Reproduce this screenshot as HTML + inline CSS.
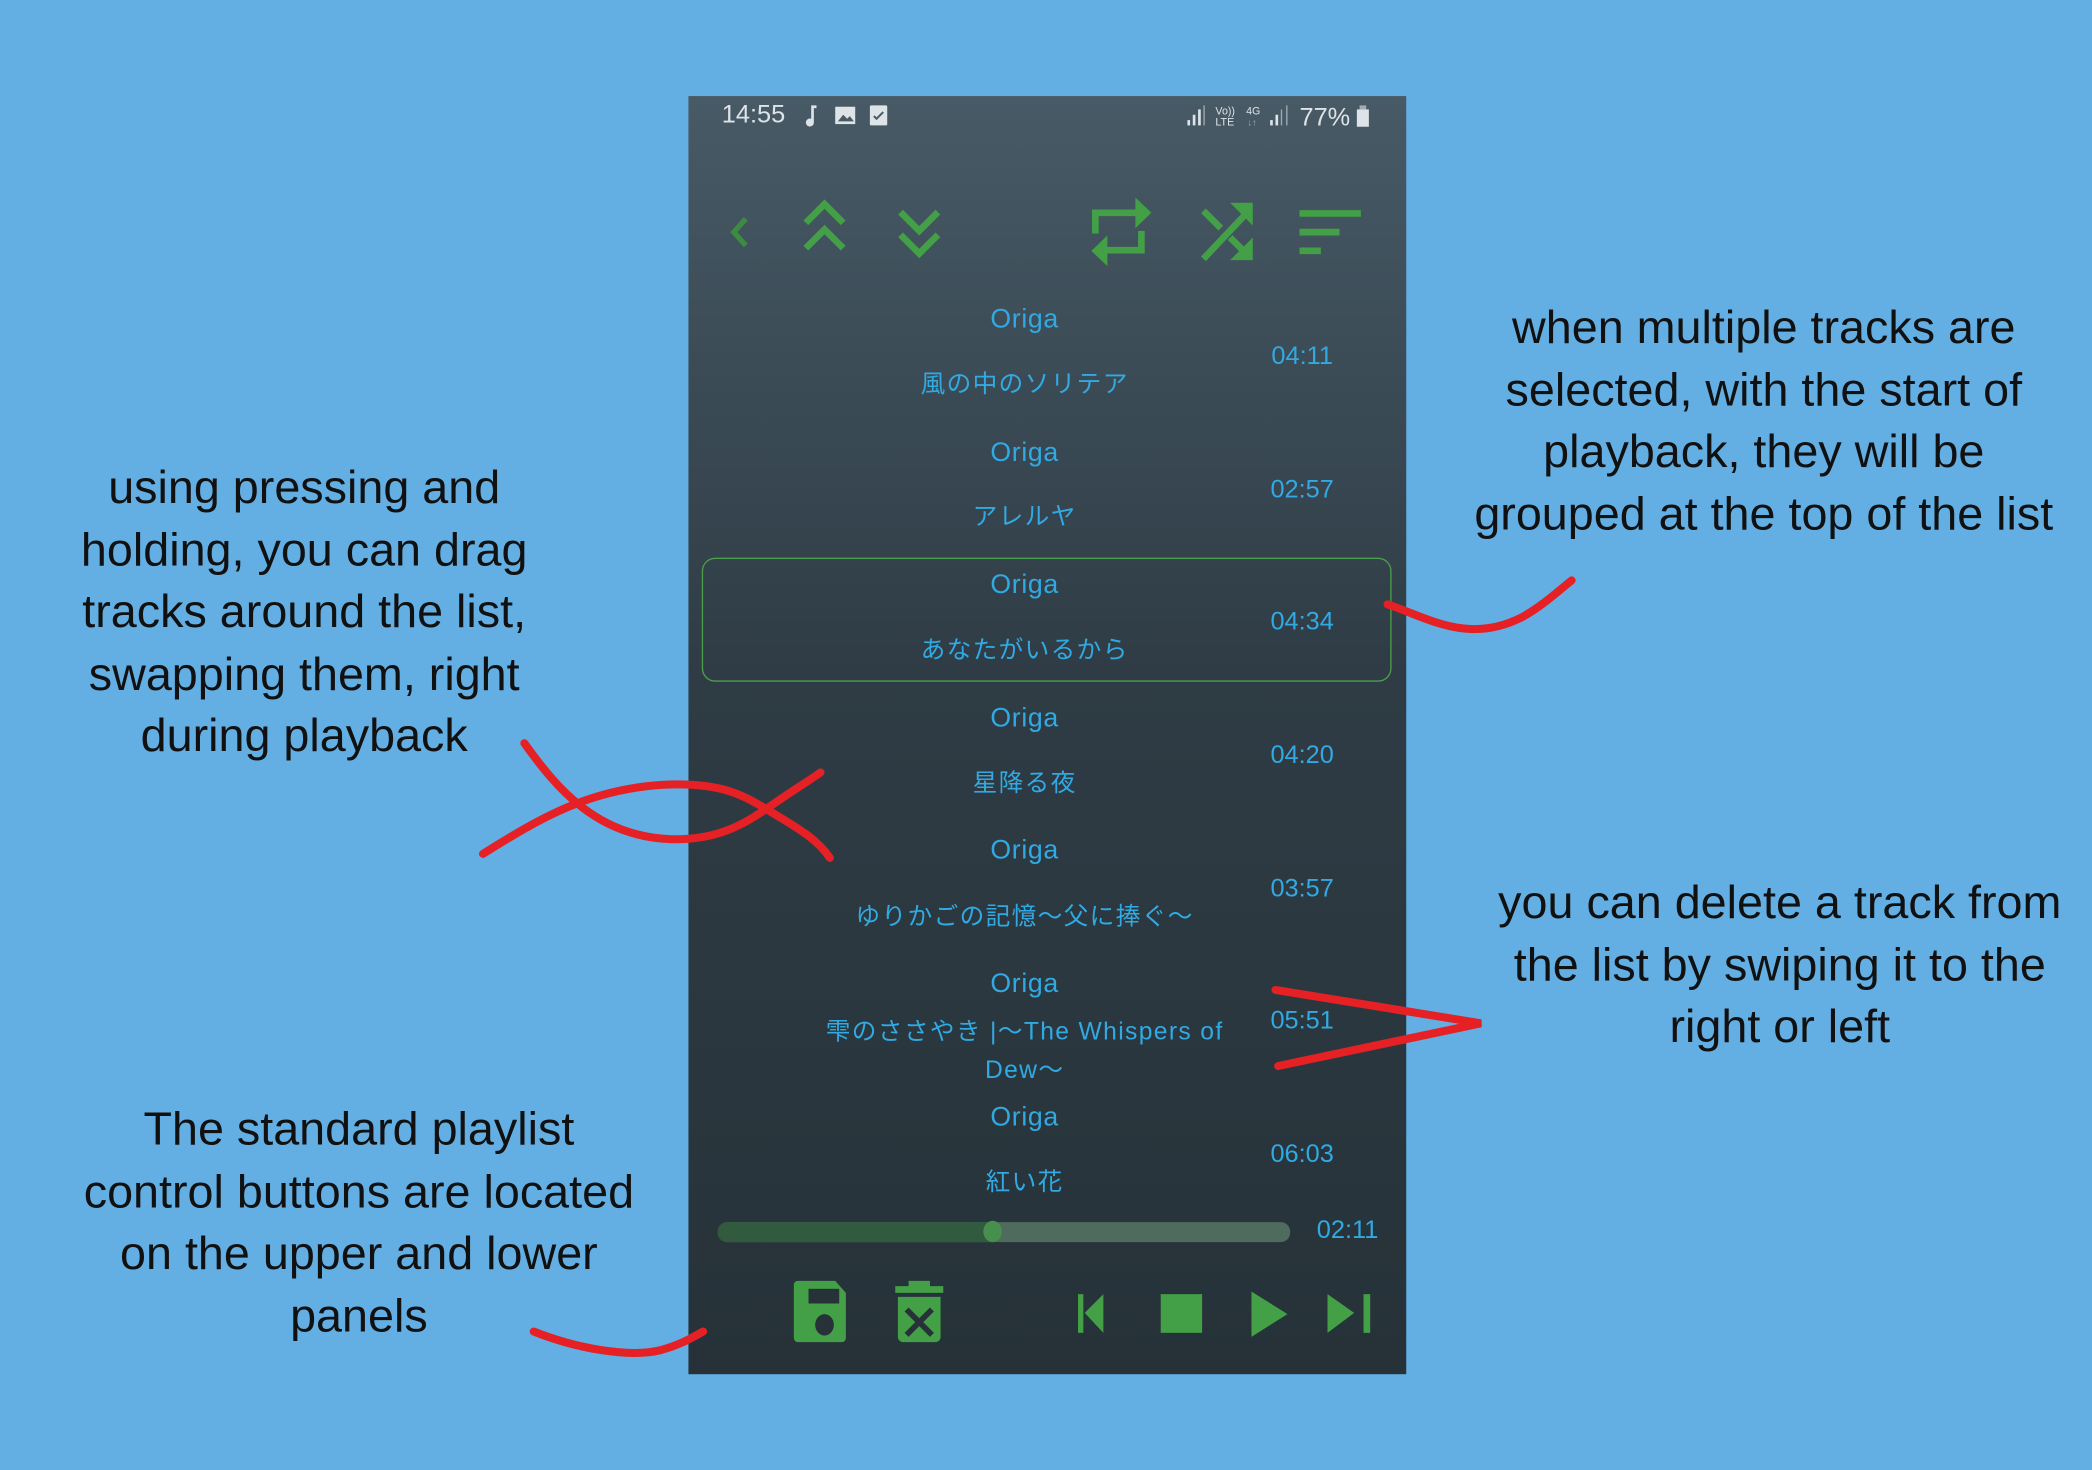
<!DOCTYPE html>
<html><head><meta charset="utf-8"><style>
html,body{margin:0;padding:0;width:2092px;height:1470px;overflow:hidden;background:#63afe3;}
#w{position:absolute;left:0;top:0;width:1568px;height:1102px;transform:scale(1.33418);transform-origin:0 0;font-family:"Liberation Sans","Noto Sans CJK JP",sans-serif;}
.ph{position:absolute;left:516px;top:72px;width:538px;height:958px;background:linear-gradient(#475a66,#2f3c45 45%,#263238);}
.t{position:absolute;color:#31a9e2;white-space:nowrap;transform:translate(-50%,-50%);}
.o{font-size:20px;letter-spacing:0.5px}
.n{font-size:18.5px;letter-spacing:1px}
.d{font-size:19px}
.a{position:absolute;color:#111;font-size:35px;text-align:center;line-height:46.5px;transform:translateX(-50%);white-space:nowrap;}
.s{position:absolute;color:#dde3e6;font-size:19px;}
</style></head><body><div id="w">
<div class="ph"></div>
<div class="s" style="left:541px;top:76px">14:55</div>
<svg style="position:absolute;left:600px;top:77px" width="70" height="20"><path d="M8 2h4v2h-2v11a3 3 0 1 1-2-3z" fill="#dde3e6"/><rect x="26" y="3" width="15" height="13" fill="#dde3e6"/><path d="M28 14l4-5 3 3 2-2 3 4z" fill="#475a66"/><rect x="52" y="2" width="13" height="15" rx="1" fill="#dde3e6"/><path d="M55 10l2 2 5-5" stroke="#475a66" stroke-width="1.5" fill="none"/></svg>
<svg style="position:absolute;left:888px;top:77px" width="145" height="20"><g fill="#dde3e6"><rect x="2" y="13" width="2" height="4"/><rect x="6" y="9" width="2" height="8"/><rect x="10" y="5" width="2" height="12"/><rect x="14" y="2" width="1" height="15" opacity=".6"/><text x="23" y="9" font-size="8">Vo))</text><text x="23" y="17" font-size="8">LTE</text><text x="46" y="9" font-size="8">4G</text><text x="47" y="17" font-size="7" opacity=".6">↓↑</text><rect x="64" y="13" width="2" height="4"/><rect x="68" y="9" width="2" height="8"/><rect x="72" y="5" width="1" height="12" opacity=".6"/><rect x="76" y="2" width="1" height="15" opacity=".6"/><text x="86" y="17" font-size="19">77%</text><rect x="129" y="5" width="9" height="13"/><rect x="131" y="2" width="5" height="3" opacity=".6"/></g></svg>
<svg style="position:absolute;left:516px;top:140px" width="538" height="70"><g fill="none" stroke="#43a047" stroke-width="5"><path d="M43 24l-9 10 9 10" stroke="#3d8a42" stroke-width="4"/><path d="M88 27l14-14 14 14M88 46l14-14 14 14"/><path d="M159 19l14 14 14-14M159 36l14 14 14-14"/><path d="M305 35V19.5h32M339.5 33v14.5H311"/><path d="M386 18l13 13M386 54L420 18M406 38l14 14"/><path d="M458 20h46M458 34h30M458 48h16"/></g><g fill="#43a047"><path d="M335 8l12 11.5-12 11.5z"/><path d="M314 36.5l-12 11.5 12 11.5z"/><path d="M423 12v17l-17-17z"/><path d="M423 55v-17l-17 17z"/></g></svg>
<div class="t o" style="left:768px;top:240px">Origa</div><div class="t n" style="left:768px;top:287px">風の中のソリテア</div><div class="t d" style="left:976px;top:268px">04:11</div>
<div class="t o" style="left:768px;top:340px">Origa</div><div class="t n" style="left:768px;top:386px">アレルヤ</div><div class="t d" style="left:976px;top:368px">02:57</div>
<div style="position:absolute;left:526px;top:418px;width:515px;height:91px;border:1.5px solid #4a9e4c;border-radius:10px"></div>
<div class="t o" style="left:768px;top:439px">Origa</div><div class="t n" style="left:768px;top:486px">あなたがいるから</div><div class="t d" style="left:976px;top:467px">04:34</div>
<div class="t o" style="left:768px;top:539px">Origa</div><div class="t n" style="left:768px;top:586px">星降る夜</div><div class="t d" style="left:976px;top:567px">04:20</div>
<div class="t o" style="left:768px;top:638px">Origa</div><div class="t n" style="left:768px;top:686px">ゆりかごの記憶〜父に捧ぐ〜</div><div class="t d" style="left:976px;top:667px">03:57</div>
<div class="t o" style="left:768px;top:738px">Origa</div><div class="t n" style="left:768px;top:772px">雫のささやき |〜The Whispers of</div><div class="t n" style="left:768px;top:801px">Dew〜</div><div class="t d" style="left:976px;top:766px">05:51</div>
<div class="t o" style="left:768px;top:838px">Origa</div><div class="t n" style="left:768px;top:885px">紅い花</div><div class="t d" style="left:976px;top:866px">06:03</div>
<div style="position:absolute;left:538px;top:916px;width:429px;height:15px;border-radius:7px;background:#4f6b5e"></div>
<div style="position:absolute;left:538px;top:916px;width:208px;height:15px;border-radius:7px 0 0 7px;background:#315a3f"></div>
<div style="position:absolute;left:737px;top:915px;width:14px;height:16px;border-radius:50%;background:#468f4c"></div>
<div class="t d" style="left:1010px;top:923px">02:11</div>
<svg style="position:absolute;left:580px;top:950px" width="460" height="70"><g fill="#43a047"><path d="M18 10h28l8 9v34a3 3 0 0 1-3 3H18a3 3 0 0 1-3-3V13a3 3 0 0 1 3-3z"/><path d="M91 14h36v5H91zM101 10h16v4h-16z"/><path d="M93 22h32v30a4 4 0 0 1-4 4H97a4 4 0 0 1-4-4z"/><rect x="228" y="20" width="4" height="29"/><path d="M233 34l14-14v29z"/><rect x="290" y="20" width="31" height="29"/><path d="M358 18l27 17-27 17z"/><path d="M415 20l20 14-20 15z"/><rect x="442" y="20" width="5" height="29"/></g><g fill="#263238"><rect x="26" y="16" width="23" height="11"/><ellipse cx="38" cy="43" rx="7" ry="8"/><path d="M101 30l8 8 8-8 3 3-8 8 8 8-3 3-8-8-8 8-3-3 8-8-8-8z"/></g></svg>
<svg style="position:absolute;left:0;top:0" width="1568" height="1102"><g fill="none" stroke="#e52125" stroke-width="6" stroke-linecap="round"><path d="M1040 453c30 10 60 30 100 10 15-8 28-20 38-28"/><path d="M393 557c25 35 55 70 110 72 40 1 60-15 82-30 10-7 20-13 30-20"/><path d="M362 640c40-25 80-50 140-52 40-1 55 8 75 20 18 11 35 20 45 35"/><path d="M956 742l154 25-152 32"/><path d="M400 998c30 12 70 20 95 14 15-4 25-10 32-14"/></g></svg>
<div class="a" style="left:228px;top:343px">using pressing and<br>holding, you can drag<br>tracks around the list,<br>swapping them, right<br>during playback</div>
<div class="a" style="left:1322px;top:223px">when multiple tracks are<br>selected, with the start of<br>playback, they will be<br>grouped at the top of the list</div>
<div class="a" style="left:1334px;top:654px">you can delete a track from<br>the list by swiping it to the<br>right or left</div>
<div class="a" style="left:269px;top:824px">The standard playlist<br>control buttons are located<br>on the upper and lower<br>panels</div>
</div></body></html>
